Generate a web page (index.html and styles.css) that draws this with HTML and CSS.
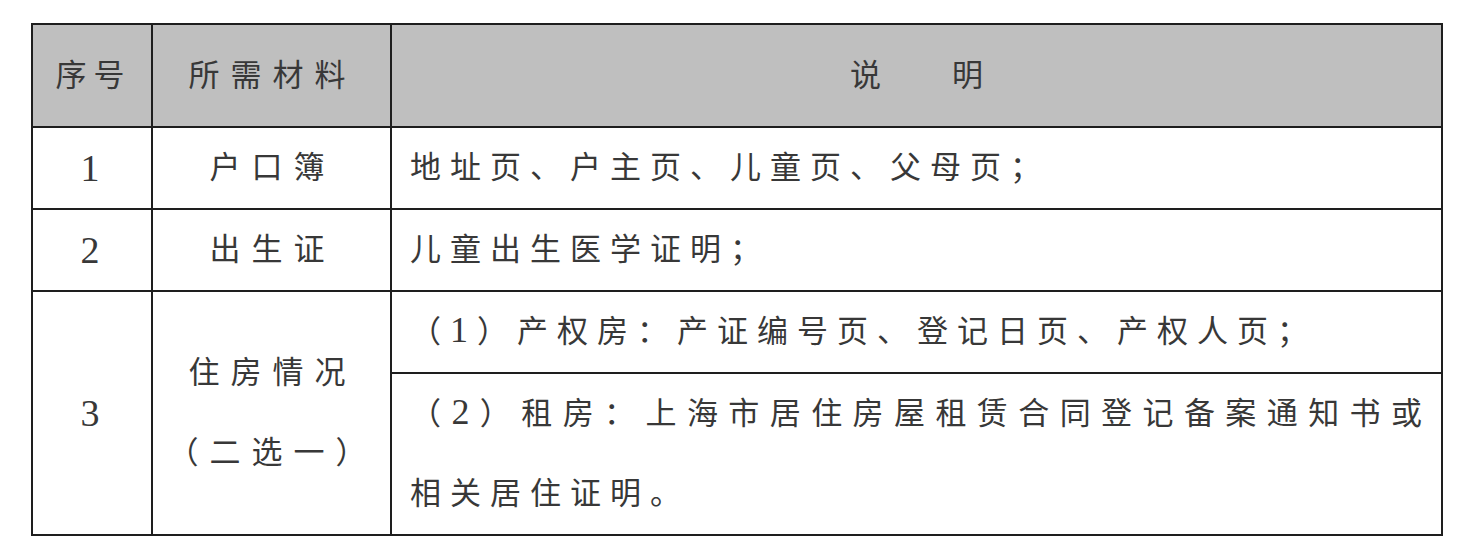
FILE: index.html
```html
<!DOCTYPE html>
<html lang="zh-CN">
<head>
<meta charset="utf-8">
<title>所需材料</title>
<link rel="stylesheet" href="styles.css">
</head>
<body>
<table class="materials">
  <colgroup>
    <col class="col-no">
    <col class="col-name">
    <col class="col-desc">
  </colgroup>
  <thead>
    <tr class="row-head">
      <th class="c-no-head">序号</th>
      <th class="c-name">所需材料</th>
      <th class="c-desc-head">说　明</th>
    </tr>
  </thead>
  <tbody>
    <tr class="row">
      <td class="c-no">1</td>
      <td class="c-name">户口簿</td>
      <td class="c-desc">地址页、户主页、儿童页、父母页；</td>
    </tr>
    <tr class="row">
      <td class="c-no">2</td>
      <td class="c-name">出生证</td>
      <td class="c-desc">儿童出生医学证明；</td>
    </tr>
    <tr class="row">
      <td class="c-no" rowspan="2">3</td>
      <td class="c-name" rowspan="2">住房情况<br>（二选一）</td>
      <td class="c-desc">（<span class="num">1</span>）产权房：产证编号页、登记日页、产权人页；</td>
    </tr>
    <tr class="row-tall">
      <td class="c-desc c-justify">（<span class="num">2</span>）租房：上海市居住房屋租赁合同登记备案通知书或相关居住证明。</td>
    </tr>
  </tbody>
</table>
</body>
</html>
```

FILE: styles.css
```css
html, body {
  margin: 0;
  padding: 0;
  background: #ffffff;
}
body {
  padding: 23px 0 0 31px;
}
.materials {
  border-collapse: collapse;
  table-layout: fixed;
  width: 1410px;
  font-family: "Liberation Serif", "Noto Sans CJK SC", serif;
  font-size: 31px;
  font-weight: 400;
  color: #383838;
  line-height: 80px;
}
.col-no { width: 120px; }
.col-name { width: 239px; }
.col-desc { width: 1051px; }
.materials th,
.materials td {
  border: 2px solid #1e1e1e;
  padding: 0;
  font-weight: 400;
  vertical-align: middle;
}
.row-head { height: 103px; }
.row-head th { background: #bfbfbf; }
.row { height: 81px; }
.row-tall { height: 160px; }
.c-no-head {
  text-align: center;
  letter-spacing: 7px;
  padding-left: 3px !important;
}
.c-no {
  text-align: center;
  font-size: 38px;
  padding-right: 4px !important;
}
.num {
  font-size: 36px;
  line-height: 1;
}
.c-name {
  text-align: center;
  letter-spacing: 11px;
  padding-left: 2px !important;
}
.c-desc-head {
  text-align: center;
  letter-spacing: 20px;
  padding-left: 20px !important;
}
.c-desc {
  text-align: left;
  letter-spacing: 9px;
  padding: 0 10px 0 18px !important;
}
.c-justify {
  text-align: justify;
  text-justify: inter-character;
}
```
